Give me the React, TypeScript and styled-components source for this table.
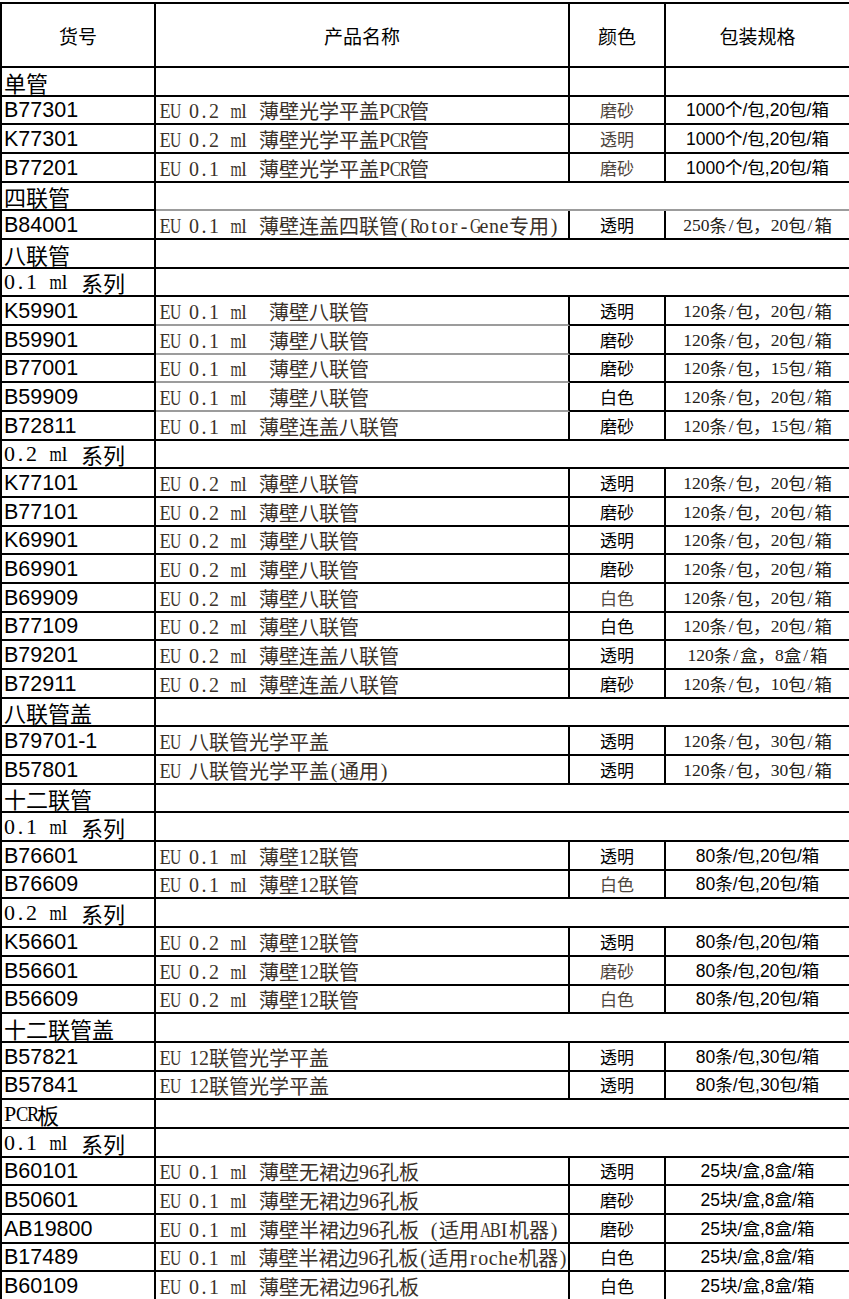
import React from "react";
import styled, { createGlobalStyle } from "styled-components";

const GlobalStyle = createGlobalStyle`
  html, body {
    margin: 0;
    padding: 0;
    background: #ffffff;
  }
  body {
    overflow: hidden;
    font-family: "Noto Sans CJK SC", sans-serif;
  }
`;

const COLS = "154px 414px 96px 183px";
const ROW_H = 28.68;

const Sheet = styled.div`
  margin-top: 2px;
  width: 849px;
  box-sizing: border-box;
  border-top: 2px solid #000;
  border-left: 2px solid #000;
`;

const Row = styled.div<{ $h: number }>`
  display: grid;
  grid-template-columns: ${COLS};
  height: ${(p) => p.$h}px;
`;

const Cell = styled.div<{ $span?: number; $last?: boolean; $soft?: boolean }>`
  box-sizing: border-box;
  grid-column: span ${(p) => p.$span ?? 1};
  display: flex;
  align-items: flex-end;
  min-width: 0;
  white-space: pre;
  border-right: ${(p) => (p.$last ? "none" : "2px solid #000")};
  border-bottom: 2px solid ${(p) => (p.$soft ? "#9c9c9c" : "#000")};
`;

const HeaderCell = styled(Cell)`
  align-items: center;
  justify-content: center;
  font-family: "Noto Sans CJK SC", sans-serif;
  font-size: 19px;
  color: #000;
`;

const CodeCell = styled(Cell)`
  font-family: "Liberation Sans", Arial, sans-serif;
  font-size: 21.5px;
  line-height: 24px;
  color: #000;
  padding: 0 0 1px 2px;
`;

const SectionCell = styled(Cell)`
  font-family: "Noto Sans CJK SC", sans-serif;
  font-size: 22px;
  line-height: 22px;
  color: #000;
  padding: 0 0 2px 2px;
`;

const NameCell = styled(Cell)`
  font-family: "Noto Sans CJK SC", sans-serif;
  font-size: 20px;
  line-height: 22px;
  color: #3b322a;
  padding: 0 0 1px 3px;
`;

const ColorCell = styled(Cell)<{ $tone: "dark" | "light" }>`
  justify-content: center;
  font-family: "Noto Sans CJK SC", sans-serif;
  font-size: 17px;
  line-height: 20px;
  color: ${(p) => (p.$tone === "dark" ? "#000" : "#4e453d")};
  padding-bottom: 3px;
`;

const PackCell = styled(Cell)<{ $serif: boolean }>`
  justify-content: center;
  font-family: ${(p) =>
    p.$serif
      ? '"Noto Sans CJK SC", sans-serif'
      : '"Liberation Sans", "Noto Sans CJK SC", sans-serif'};
  font-size: 17.5px;
  line-height: 20px;
  color: ${(p) => (p.$serif ? "#221c18" : "#000")};
  padding-bottom: 3px;
`;

/* half-width serif glyph, like the Latin part of a Song typeface */
const Glyph = styled.span`
  display: inline-block;
  width: 0.5em;
  text-align: center;
  font-family: "Liberation Serif", "Times New Roman", serif;
`;

const WIDE: Record<string, number> = {
  A: 0.722, B: 0.667, C: 0.667, D: 0.722, E: 0.611, G: 0.722, H: 0.722,
  K: 0.722, L: 0.611, M: 0.889, N: 0.722, O: 0.722, Q: 0.722, R: 0.667,
  T: 0.611, U: 0.722, V: 0.722, W: 0.944, X: 0.722, Y: 0.722, Z: 0.611,
  m: 0.778, w: 0.722,
};

function HalfRun({ text }: { text: string }) {
  return (
    <>
      {Array.from(text).map((ch, i) => {
        const w = WIDE[ch];
        const scale = w ? Math.min(1, 0.56 / w) : 1;
        return (
          <Glyph key={i} style={scale < 1 ? { transform: `scaleX(${scale.toFixed(3)})` } : undefined}>
            {ch}
          </Glyph>
        );
      })}
    </>
  );
}

function Mixed({ text }: { text: string }) {
  const parts = text.split(/([\x20-\x7e]+)/).filter((s) => s.length > 0);
  return (
    <>
      {parts.map((s, i) =>
        /^[\x20-\x7e]+$/.test(s) ? (
          <HalfRun key={i} text={s} />
        ) : (
          <React.Fragment key={i}>{s}</React.Fragment>
        )
      )}
    </>
  );
}

type Section = {
  kind: "section";
  label: string;
  mixed?: boolean;
  cells?: boolean;
  soft?: boolean;
};

type Item = {
  kind: "item";
  code: string;
  name: string;
  color: string;
  tone: "dark" | "light";
  pack: string;
  serif: boolean;
  soft?: boolean;
};

type Line = Section | Item;

const sec = (label: string, opts: Partial<Section> = {}): Section => ({ kind: "section", label, ...opts });
const item = (
  code: string,
  name: string,
  color: string,
  tone: "dark" | "light",
  pack: string,
  serif: boolean,
  soft = false
): Item => ({ kind: "item", code, name, color, tone, pack, serif, soft });

const P1000 = "1000个/包,20包/箱";
const P120_20 = "120条/包，20包/箱";
const P120_15 = "120条/包，15包/箱";
const P80_20 = "80条/包,20包/箱";
const P80_30 = "80条/包,30包/箱";
const P25 = "25块/盒,8盒/箱";

const lines: Line[] = [
  sec("单管", { cells: true }),
  item("B77301", "EU 0.2 ml 薄壁光学平盖PCR管", "磨砂", "light", P1000, false),
  item("K77301", "EU 0.2 ml 薄壁光学平盖PCR管", "透明", "light", P1000, false),
  item("B77201", "EU 0.1 ml 薄壁光学平盖PCR管", "磨砂", "light", P1000, false),
  sec("四联管", { soft: true }),
  item("B84001", "EU 0.1 ml 薄壁连盖四联管(Rotor-Gene专用)", "透明", "dark", "250条/包，20包/箱", true),
  sec("八联管"),
  sec("0.1 ml 系列", { mixed: true }),
  item("K59901", "EU 0.1 ml  薄壁八联管", "透明", "dark", P120_20, true, true),
  item("B59901", "EU 0.1 ml  薄壁八联管", "磨砂", "dark", P120_20, true, true),
  item("B77001", "EU 0.1 ml  薄壁八联管", "磨砂", "dark", P120_15, true, true),
  item("B59909", "EU 0.1 ml  薄壁八联管", "白色", "dark", P120_20, true, true),
  item("B72811", "EU 0.1 ml 薄壁连盖八联管", "磨砂", "dark", P120_15, true),
  sec("0.2 ml 系列", { mixed: true }),
  item("K77101", "EU 0.2 ml 薄壁八联管", "透明", "dark", P120_20, true),
  item("B77101", "EU 0.2 ml 薄壁八联管", "磨砂", "dark", P120_20, true),
  item("K69901", "EU 0.2 ml 薄壁八联管", "透明", "dark", P120_20, true),
  item("B69901", "EU 0.2 ml 薄壁八联管", "磨砂", "dark", P120_20, true),
  item("B69909", "EU 0.2 ml 薄壁八联管", "白色", "light", P120_20, true),
  item("B77109", "EU 0.2 ml 薄壁八联管", "白色", "dark", P120_20, true),
  item("B79201", "EU 0.2 ml 薄壁连盖八联管", "透明", "dark", "120条/盒，8盒/箱", true),
  item("B72911", "EU 0.2 ml 薄壁连盖八联管", "磨砂", "dark", "120条/包，10包/箱", true),
  sec("八联管盖"),
  item("B79701-1", "EU 八联管光学平盖", "透明", "dark", "120条/包，30包/箱", true),
  item("B57801", "EU 八联管光学平盖(通用)", "透明", "dark", "120条/包，30包/箱", true),
  sec("十二联管"),
  sec("0.1 ml 系列", { mixed: true }),
  item("B76601", "EU 0.1 ml 薄壁12联管", "透明", "dark", P80_20, false),
  item("B76609", "EU 0.1 ml 薄壁12联管", "白色", "light", P80_20, false),
  sec("0.2 ml 系列", { mixed: true }),
  item("K56601", "EU 0.2 ml 薄壁12联管", "透明", "dark", P80_20, false),
  item("B56601", "EU 0.2 ml 薄壁12联管", "磨砂", "light", P80_20, false),
  item("B56609", "EU 0.2 ml 薄壁12联管", "白色", "light", P80_20, false),
  sec("十二联管盖"),
  item("B57821", "EU 12联管光学平盖", "透明", "dark", P80_30, false),
  item("B57841", "EU 12联管光学平盖", "透明", "dark", P80_30, false),
  sec("PCR板", { mixed: true }),
  sec("0.1 ml 系列", { mixed: true }),
  item("B60101", "EU 0.1 ml 薄壁无裙边96孔板", "透明", "dark", P25, false),
  item("B50601", "EU 0.1 ml 薄壁无裙边96孔板", "磨砂", "dark", P25, false),
  item("AB19800", "EU 0.1 ml 薄壁半裙边96孔板 (适用ABI机器)", "磨砂", "dark", P25, false),
  item("B17489", "EU 0.1 ml 薄壁半裙边96孔板(适用roche机器)", "白色", "dark", P25, false),
  item("B60109", "EU 0.1 ml 薄壁无裙边96孔板", "白色", "dark", P25, false),
];

function SectionRow({ s }: { s: Section }) {
  return (
    <Row $h={ROW_H}>
      <SectionCell>{s.mixed ? <Mixed text={s.label} /> : s.label}</SectionCell>
      {s.cells ? (
        <>
          <Cell />
          <Cell />
          <Cell $last />
        </>
      ) : (
        <Cell $span={3} $last $soft={s.soft} />
      )}
    </Row>
  );
}

function ItemRow({ it }: { it: Item }) {
  return (
    <Row $h={ROW_H}>
      <CodeCell>{it.code}</CodeCell>
      <NameCell $soft={it.soft}>
        <Mixed text={it.name} />
      </NameCell>
      <ColorCell $tone={it.tone}>{it.color}</ColorCell>
      <PackCell $serif={it.serif} $last>
        {it.serif ? <Mixed text={it.pack} /> : it.pack}
      </PackCell>
    </Row>
  );
}

export default function App() {
  return (
    <>
      <GlobalStyle />
      <Sheet>
        <Row $h={64}>
          <HeaderCell>货号</HeaderCell>
          <HeaderCell>产品名称</HeaderCell>
          <HeaderCell>颜色</HeaderCell>
          <HeaderCell $last>包装规格</HeaderCell>
        </Row>
        {lines.map((l, i) =>
          l.kind === "section" ? <SectionRow key={i} s={l} /> : <ItemRow key={i} it={l} />
        )}
      </Sheet>
    </>
  );
}
